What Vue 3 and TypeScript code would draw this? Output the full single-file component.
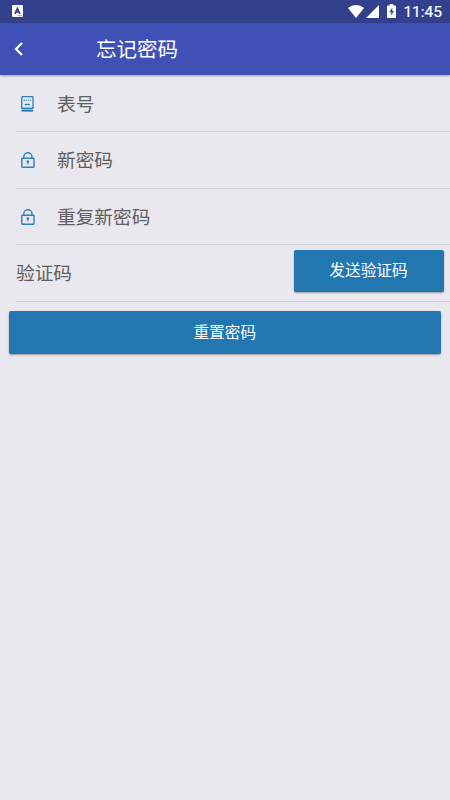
<script setup lang="ts">
interface Field {
  icon: 'meter' | 'lock'
  label: string
}

const fields: Field[] = [
  { icon: 'meter', label: '表号' },
  { icon: 'lock', label: '新密码' },
  { icon: 'lock', label: '重复新密码' },
]
</script>

<template>
  <div class="screen">
    <div class="status">
      <svg class="app-badge" viewBox="0 0 11 12">
        <rect width="11" height="12" rx="1" fill="#fff" />
        <path d="M2.9 8.800 5.400 3.400 7.900 8.800M3.900 7h3" fill="none" stroke="#33418d" stroke-width="1.700" />
        <path d="M5.500 10.700h4.500" stroke="#33418d" stroke-width=".6" stroke-dasharray="1.200 .4" />
      </svg>
      <svg class="wifi" viewBox="0 0 16 13">
        <path d="M0 3C4.600-.9 11.400-.9 16 3L8 13Z" fill="#fff" />
      </svg>
      <svg class="signal" viewBox="0 0 13 13">
        <path d="M13 0V13H0Z" fill="#fff" />
      </svg>
      <svg class="battery" viewBox="0 0 9 14">
        <path d="M2.800 0h3.400v1.400H8c.6 0 1 .4 1 1V13c0 .6-.4 1-1 1H1c-.6 0-1-.4-1-1V2.400c0-.6.4-1 1-1h1.800Z" fill="#fff" />
        <path d="M5.300 3.700 2.200 8.300h2v3.500L6.900 7.100H5.300Z" fill="#33418d" />
      </svg>
      <span class="time">11:45</span>
    </div>
    <header class="bar">
      <svg class="back" viewBox="0 0 9 14">
        <path d="M8 1 2 7l6 6" fill="none" stroke="#fff" stroke-width="2.200" />
      </svg>
      <h1 class="title">忘记密码</h1>
    </header>
    <main class="form">
      <div v-for="field in fields" :key="field.label" class="row">
        <svg v-if="field.icon === 'meter'" class="icon" viewBox="0 0 14 16">
          <rect x=".7" y=".7" width="11.300" height="12" rx=".8" fill="none" stroke="#2c82b6" stroke-width="1.300" />
          <path d="M2.600 4.200h7.700" stroke="#2c82b6" stroke-width="1.100" stroke-dasharray="1.300 .8" />
          <path d="M3.700 8.500h5.300" stroke="#2c82b6" stroke-width="1.400" />
          <path d="M.5 12.200h11.700" stroke="#2c82b6" stroke-width="1.300" />
          <path d="M.5 14.700h11.700" stroke="#2279b2" stroke-width="1.800" />
        </svg>
        <svg v-else class="icon" viewBox="0 0 14 16">
          <rect x=".8" y="6.200" width="12.200" height="9" rx=".6" fill="none" stroke="#2c82b6" stroke-width="1.400" />
          <path d="M2.800 6V4.800a4.100 4.100 0 0 1 8.200 0V6" fill="none" stroke="#2c82b6" stroke-width="1.400" />
          <circle cx="6.900" cy="9.600" r="1.300" fill="#2c82b6" />
          <path d="M6.900 9.500v3" stroke="#2c82b6" stroke-width="1" />
        </svg>
        <span class="label">{{ field.label }}</span>
      </div>
      <div class="row code">
        <span class="label">验证码</span>
        <button class="btn send" type="button">发送验证码</button>
      </div>
      <button class="btn reset" type="button">重置密码</button>
    </main>
  </div>
</template>

<style>
body {
  margin: 0;
  background: #e9e8ee;
}
</style>

<style scoped>
.screen {
  height: 800px;
  overflow: hidden;
  background: #e9e8ee;
  font-family: Roboto, "Noto Sans CJK SC", sans-serif;
}
.status {
  display: flex;
  align-items: center;
  box-sizing: border-box;
  height: 22.500px;
  padding: 0 8px 0 11.500px;
  background: #33408e;
}
.app-badge {
  width: 11px;
  height: 12px;
}
.wifi {
  width: 16px;
  height: 13px;
  margin-left: auto;
}
.signal {
  width: 13px;
  height: 13px;
  margin-left: 2px;
}
.battery {
  width: 9px;
  height: 14px;
  margin: 0 7px 0 8px;
}
.time {
  padding-top: 1px;
  color: #fff;
  font-size: 15.500px;
  font-weight: 400;
  line-height: 22px;
  -webkit-text-stroke: .2px #fff;
}
.bar {
  position: relative;
  display: flex;
  align-items: center;
  height: 52.500px;
  padding-left: 14px;
  background: #3f51b5;
  box-shadow: 0 1px 2px rgba(0, 0, 0, .32);
}
.back {
  width: 9px;
  height: 14px;
}
.title {
  margin: 0 0 0 73px;
  padding-top: 2px;
  color: #fff;
  font-size: 20.500px;
  font-weight: 400;
  line-height: 30px;
}
.form {
  display: flex;
  flex-direction: column;
  padding-top: .6px;
}
.row {
  display: flex;
  align-items: center;
  box-sizing: border-box;
  height: 56.600px;
  margin-left: 16px;
  padding: 1px 0 0 5px;
  border-bottom: 1px solid #cecdd2;
}
.icon {
  width: 14px;
  height: 16px;
  margin-right: 22px;
}
.label {
  padding-top: 2px;
  color: #5e5e60;
  font-size: 18.700px;
  line-height: 28px;
}
.code {
  justify-content: space-between;
  padding: 0 6.500px 0 0;
}
.btn {
  padding: 0 0 2px;
  border: 0;
  border-radius: 2px;
  background: #2277b0;
  box-shadow: 0 1px 2px rgba(0, 0, 0, .35);
  color: #fff;
  font-family: inherit;
  font-size: 15.700px;
}
.send {
  width: 150px;
  height: 42px;
  margin-top: -5px;
}
.reset {
  height: 42.500px;
  margin: 9.400px 9.500px 0 9px;
  padding-bottom: 3px;
}
</style>
